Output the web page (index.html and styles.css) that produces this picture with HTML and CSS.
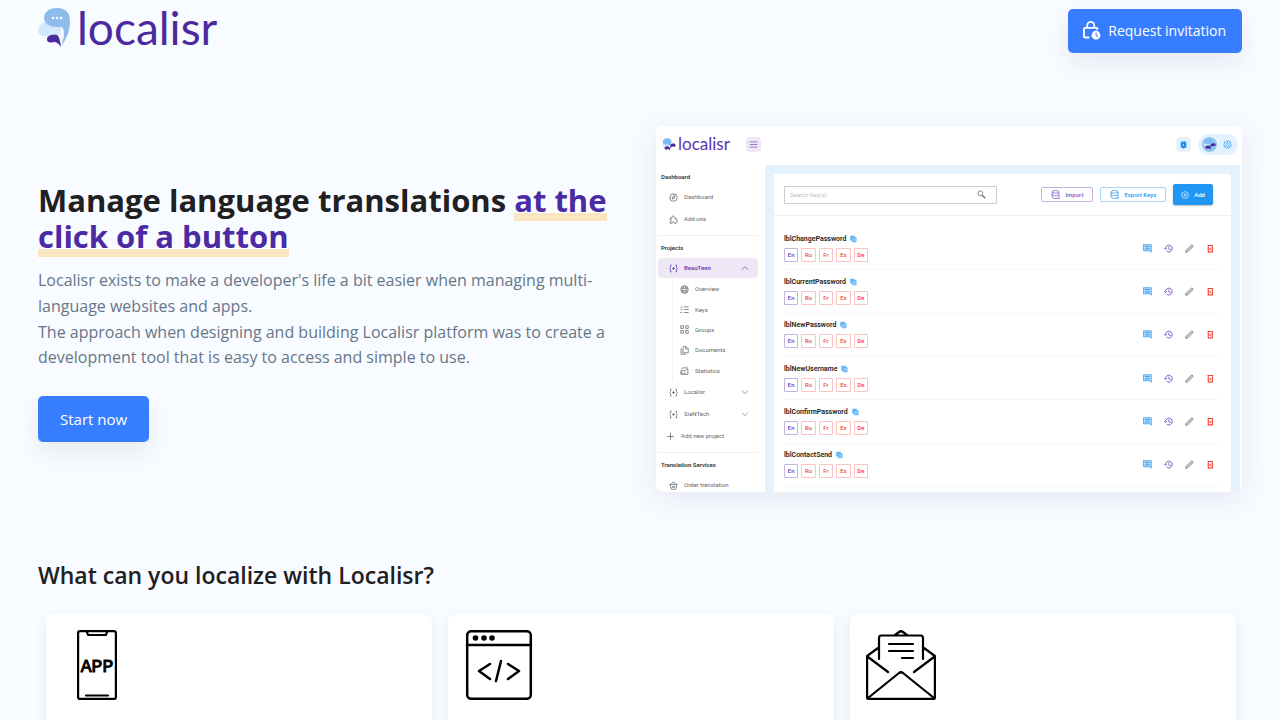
FILE: index.html
```html
<!DOCTYPE html>
<html lang="en">
<head>
<meta charset="utf-8">
<title>Localisr</title>
<meta name="viewport" content="width=device-width, initial-scale=1">
<link rel="stylesheet" href="styles.css">
</head>
<body>
<svg class="sprite" aria-hidden="true">
  <symbol id="mark" viewBox="0 0 34 40">
    <path fill="#d2e9fb" d="M15 13C7 12 1 17 0 22c0 4 4 7 9 6 5 0 8-2 13-1l2-8z"/>
    <path fill="#8dbcec" d="M19 0C10 0 6 5 6 10s5 9 13 9h5c3 3 2 11-1 19 6-7 9-17 9-25C32 5 28 0 19 0z"/>
    <path fill="#e9f4fd" d="M24 20c4 5 1 12-1 19l-1-9c4-2 4-6 2-10z"/>
    <path fill="#4b2a9e" d="M9 31c0-4 6-5 10-4 2 1 3 5 4 12-2-3-4-5-7-5-4 1-7 1-7-3z"/>
    <g fill="#fff"><circle cx="15" cy="10" r="1.300"/><circle cx="19" cy="10" r="1.300"/><circle cx="23" cy="10" r="1.300"/></g>
  </symbol>
  <symbol id="mark-wide" viewBox="0 0 34 30">
    <path fill="#cde8fb" d="M11 6C4 8 1 13 2 19l7 4 12-9z"/>
    <path fill="#7fbcf0" d="M13 0C5 0 1 5 2 10c1 4 6 6 13 5l5 3c4-4 6-18-7-18z"/>
    <path fill="#4b2a9e" d="M6 24c0-5 9-7 13-2l1 8c-3-5-6-3-9-3-3 1-5-1-5-3zm14-7c2-5 13-6 13 0 0 4-4 4-7 3-3 0-5 3-6 6z"/>
  </symbol>
  <symbol id="lock" viewBox="0 0 24 24">
    <path fill="none" stroke="#fff" stroke-width="2.200" d="M10 21H4.600a1 1 0 0 1-1-1V10.500a1 1 0 0 1 1-1h14a1 1 0 0 1 1 1V12M7.500 9V6.500a4.200 4.200 0 0 1 8.400 0V9"/>
    <path fill="#fff" d="M18 13a5.300 5.300 0 1 0 0 10.600A5.300 5.300 0 0 0 18 13zm1.800 7.800-2.300-2.200V15h1.200v3.100l1.900 1.900z"/>
  </symbol>
  <symbol id="menu" viewBox="0 0 24 24"><path d="M2 5h20M2 12h20M2 19h20"/></symbol>
  <symbol id="gauge" viewBox="0 0 24 24"><circle cx="12" cy="12" r="10"/><path d="m8 16 2-6 6-3-2 7zM12 3v2M4 12h2"/></symbol>
  <symbol id="puzzle" viewBox="0 0 24 24"><path d="M3 8h5c-2-7 7-7 6 0h5v5c5-1 5 6 0 6v3h-5c0-5-6-5-6 0H3v-5c5 0 5-5 0-5z"/></symbol>
  <symbol id="braces" viewBox="0 0 24 24"><path d="M7 3H4v6l-2 3 2 3v6h3M17 3h3v6l2 3-2 3v6h-3M8 12h8M12 8v8"/></symbol>
  <symbol id="globe" viewBox="0 0 24 24"><circle cx="12" cy="12" r="10"/><ellipse cx="12" cy="12" rx="4.500" ry="10"/><path d="M2.500 8.500h19M2.500 15.500h19"/></symbol>
  <symbol id="checks" viewBox="0 0 24 24"><path d="m1 5 2 2 4-4M1 12l2 2 4-4M1 20h5M11 5h12M11 12h12M11 20h12"/></symbol>
  <symbol id="groups" viewBox="0 0 24 24"><path d="M2 2h7v7H2zM15 2h7v7h-7zM2 15h7v7H2zM15 15h7v7h-7z"/></symbol>
  <symbol id="docs" viewBox="0 0 24 24"><path d="M8 1h8l6 6v11H8zM15 2v6h6M3 6v16h13"/></symbol>
  <symbol id="stats" viewBox="0 0 24 24"><path d="M3 12v10h18V8M3 22V14l5-3 5 3 8-9M8 18v4M13 17v5M3 8l6-4 4 2 7-4"/></symbol>
  <symbol id="plus" viewBox="0 0 24 24"><path d="M12 3v18M3 12h18"/></symbol>
  <symbol id="basket" viewBox="0 0 24 24"><path d="M1 9h22M3 9l3 13h12l3-13M6 9l6-7 6 7M9 13v5M15 13v5M12 13v5"/></symbol>
  <symbol id="up" viewBox="0 0 24 24"><path d="m3 17 9-9 9 9"/></symbol>
  <symbol id="down" viewBox="0 0 24 24"><path d="m3 8 9 9 9-9"/></symbol>
  <symbol id="search" viewBox="0 0 24 24"><circle cx="9" cy="9" r="6.500"/><path stroke-width="3" d="m14 14 8 8"/></symbol>
  <symbol id="database" viewBox="0 0 24 24"><ellipse cx="12" cy="5" rx="9" ry="3.500"/><path d="M3 5v14c0 4 12 4 15 2M21 5v11M3 12c0 4 18 4 18 0M22 16v6h-6"/></symbol>
  <symbol id="circle-plus" viewBox="0 0 24 24"><circle cx="12" cy="12" r="10"/><path d="M12 7v10M7 12h10"/></symbol>
  <symbol id="gear" viewBox="0 0 24 24"><circle cx="12" cy="12" r="4"/><path d="m9 2 3 2 3-2 2 3 4 1-1 4 2 2-2 3 1 3-4 1-2 3-3-2-3 2-2-3-4-1 1-3-2-3 2-2-1-4 4-1z"/></symbol>
  <symbol id="bug" viewBox="0 0 24 24"><path fill="currentColor" d="M7 6h10v13l-5 3-5-3z"/><path d="M3 8h18M3 13h18M3 18h18M8 2l3 4M16 2l-3 4"/><path stroke="#e3f2fd" d="M12 10v6"/></symbol>
  <symbol id="copy" viewBox="0 0 24 24"><path fill="#90caf9" d="M2 16V2h13v4H7v10zM8 7h13v15H8z"/></symbol>
  <symbol id="comment" viewBox="0 0 24 24"><path fill="#bbdefb" d="M1 2h21v20l-4-4H1z"/><path stroke-width="2.500" d="M5 7h13M5 13h13"/></symbol>
  <symbol id="history" viewBox="0 0 24 24"><path stroke-width="2.500" d="M4 12a9 9 0 1 1 3 7M0 11l4 4 4-4M13 7v6l5 2"/></symbol>
  <symbol id="pencil" viewBox="0 0 24 24"><path fill="#ccc" d="M2 22v-4L18 2l4 4L6 22z"/></symbol>
  <symbol id="trash" viewBox="0 0 24 24"><path stroke-width="3" d="M4 4h15M6 6v15h11V6"/><path d="m9 10 5 6M14 10l-5 6"/></symbol>
</svg>

<header class="site-header">
  <a class="logo" href="#"><svg class="logo-mark" aria-hidden="true"><use href="#mark"/></svg><span class="wordmark">localisr</span></a>
  <button class="btn btn-invite" type="button"><svg class="btn-icon" aria-hidden="true"><use href="#lock"/></svg>Request invitation</button>
</header>

<main>
<section class="hero">
  <div class="intro">
    <h1>Manage language translations <span class="mark-text">at the click of a button</span></h1>
    <p>Localisr exists to make a developer's life a bit easier when managing multi-language websites and apps.<br>The approach when designing and building Localisr platform was to create a development tool that is easy to access and simple to use.</p>
    <a class="btn btn-start" href="#">Start now</a>
  </div>

  <div class="app">
    <div class="app-top">
      <a class="app-logo" href="#"><svg class="app-mark" aria-hidden="true"><use href="#mark-wide"/></svg><span class="app-word">localisr</span></a>
      <button class="square purple" type="button" aria-label="Menu"><svg class="icon"><use href="#menu"/></svg></button>
      <div class="app-user">
        <button class="square" type="button" aria-label="Report a bug"><svg class="icon"><use href="#bug"/></svg></button>
        <button class="profile" type="button" aria-label="Profile"><span class="avatar"><svg class="avatar-mark"><use href="#mark-wide"/></svg></span><svg class="icon"><use href="#gear"/></svg></button>
      </div>
    </div>
    <div class="app-body">
      <nav class="side">
        <div class="side-title">Dashboard</div>
        <a class="item" href="#"><svg class="icon"><use href="#gauge"/></svg>Dashboard</a>
        <a class="item" href="#"><svg class="icon"><use href="#puzzle"/></svg>Add-ons</a>
        <hr class="rule">
        <div class="side-title">Projects</div>
        <a class="item active" href="#"><svg class="icon"><use href="#braces"/></svg>BeauTeen<svg class="icon chevron"><use href="#up"/></svg></a>
        <div class="sub">
          <a class="subitem" href="#"><svg class="icon"><use href="#globe"/></svg>Overview</a>
          <a class="subitem" href="#"><svg class="icon"><use href="#checks"/></svg>Keys</a>
          <a class="subitem" href="#"><svg class="icon"><use href="#groups"/></svg>Groups</a>
          <a class="subitem" href="#"><svg class="icon"><use href="#docs"/></svg>Documents</a>
          <a class="subitem" href="#"><svg class="icon"><use href="#stats"/></svg>Statistics</a>
        </div>
        <a class="item" href="#"><svg class="icon"><use href="#braces"/></svg>Localisr<svg class="icon chevron"><use href="#down"/></svg></a>
        <a class="item" href="#"><svg class="icon"><use href="#braces"/></svg>SiaNTech<svg class="icon chevron"><use href="#down"/></svg></a>
        <a class="item add" href="#"><svg class="icon"><use href="#plus"/></svg>Add new project</a>
        <hr class="rule">
        <div class="side-title">Translation Services</div>
        <a class="item" href="#"><svg class="icon"><use href="#basket"/></svg>Order translation</a>
      </nav>
      <div class="workspace">
        <div class="panel">
          <div class="toolbar">
            <div class="search"><input type="text" placeholder="Search Key(s)" aria-label="Search keys"><svg class="icon"><use href="#search"/></svg></div>
            <button class="tool import" type="button"><svg class="icon"><use href="#database"/></svg>Import</button>
            <button class="tool export" type="button"><svg class="icon"><use href="#database"/></svg>Export Keys</button>
            <button class="tool create" type="button"><svg class="icon"><use href="#circle-plus"/></svg>Add</button>
          </div>
          <ul class="keys" id="keys"></ul>
        </div>
      </div>
    </div>
  </div>
</section>

<section class="features">
  <h2>What can you localize with Localisr?</h2>
  <div class="cards">
    <article class="card">
      <svg class="card-icon" viewBox="0 0 70 70" role="img" aria-label="Mobile apps" fill="none" stroke="#000" stroke-width="2.200" stroke-linecap="round" stroke-linejoin="round">
        <rect x="16.100" y="1.100" width="37.800" height="67.800" rx="2"/><path d="M25 2l1 3h18l1-3M24 65.500h22"/>
        <text class="app-label" x="35" y="42" text-anchor="middle">APP</text>
      </svg>
    </article>
    <article class="card">
      <svg class="card-icon" viewBox="0 0 70 70" role="img" aria-label="Websites" fill="none" stroke="#000" stroke-width="2.500" stroke-linecap="round" stroke-linejoin="round">
        <rect x="3.200" y="1.200" width="63.600" height="67.600" rx="4"/><path d="M3 15h64M26 34 15 41l11 8M44 34l11 7-11 8M37 31l-5 20"/>
        <g fill="#000" stroke="none"><circle cx="11.500" cy="8" r="2.800"/><circle cx="20" cy="8" r="2.800"/><circle cx="28" cy="8" r="2.800"/></g>
      </svg>
    </article>
    <article class="card">
      <svg class="card-icon" viewBox="0 0 70 70" role="img" aria-label="Emails" fill="none" stroke="#000" stroke-width="2.200" stroke-linecap="round" stroke-linejoin="round">
        <path d="M13 29V8q0-2.500 2.500-2.500h39Q57 5.500 57 8v21M29 5l4-3q2-1.500 4 0l4 3M23 14h24M23 21h24M36 28h11M12 18 1.100 26v42q0 .9 1 .9h65.800q1 0 1-.9V26L58 18M2 27l20 15M68 27 48 42M2 68l31-25q2-1.500 4 0l31 25"/>
      </svg>
    </article>
  </div>
</section>
</main>
<script src="keys.js"></script>
</body>
</html>
```

FILE: styles.css
```css
* { box-sizing: border-box; }
body {
  margin: 0;
  height: 100vh;
  overflow: hidden;
  background: #f8fbff;
  color: #1e2022;
  font-family: "Open Sans", "Noto Sans", sans-serif;
  font-size: 16px;
}
a { color: inherit; text-decoration: none; }
button { font: inherit; cursor: pointer; }
.sprite { position: absolute; width: 0; height: 0; }

.site-header {
  display: flex;
  justify-content: space-between;
  align-items: center;
  height: 62px;
  padding: 0 38px;
}
.logo { display: flex; align-items: center; gap: 5px; padding-bottom: 6px; }
.logo-mark { width: 34px; height: 40px; }
.wordmark { color: #4b2a9e; font-family: Lato, sans-serif; font-size: 46px; line-height: 40px; }
.btn {
  display: inline-flex;
  align-items: center;
  border: 0;
  border-radius: 5px;
  background: #377dff;
  color: #fff;
  box-shadow: 0 10px 25px rgba(30, 40, 90, .08);
}
.btn-invite { height: 44px; padding: 0 16px 2px 13px; gap: 7px; font-size: 14px; }
.btn-icon { width: 20px; height: 20px; }
.btn-start { height: 46px; padding: 0 22px; font-size: 15px; }

.hero {
  display: grid;
  grid-template-columns: 1fr 1fr;
  gap: 32px;
  align-items: center;
  padding: 64px 38px 0;
}
.intro { padding-top: 6px; }
h1 { margin: 0 0 14px; font-size: 31px; line-height: 36px; font-weight: 700; }
.mark-text { color: #4b2aa3; background: linear-gradient(transparent 80%, #f9e5bf 80%); }
.intro p { margin: 0 0 25px; color: #677788; line-height: 1.6; }

.app {
  display: flex;
  flex-direction: column;
  aspect-ratio: 586 / 366;
  overflow: hidden;
  border-radius: 7px;
  background: #fff;
  box-shadow: 0 6px 30px rgba(60, 70, 130, .1);
  color: #666;
  font-family: Roboto, sans-serif;
  font-size: 6px;
  line-height: 8px;
}
.icon { flex: none; width: 9px; height: 9px; fill: none; stroke: currentColor; stroke-width: 2; }
.app-top { display: flex; align-items: center; flex: none; height: 39px; padding: 0 4px 3px 6px; }
.app-logo { display: flex; align-items: center; gap: 2px; width: 84px; }
.app-mark { width: 14px; height: 13px; }
.app-word { color: #5a35b0; font-family: Lato, sans-serif; font-size: 17px; line-height: 16px; }
.square {
  display: grid;
  place-items: center;
  width: 15px;
  height: 15px;
  padding: 0;
  border: 0;
  border-radius: 4px;
  background: #e3f2fd;
  color: #1e88e5;
}
.purple { background: #ede7f6; color: #7e57c2; }
.app-user { display: flex; align-items: center; gap: 7px; margin-left: auto; }
.profile {
  display: flex;
  align-items: center;
  gap: 6px;
  height: 21px;
  padding: 0 6px 0 4px;
  border: 0;
  border-radius: 11px;
  background: #e3f2fd;
  color: #2196f3;
}
.avatar { display: grid; place-items: center; width: 15px; height: 15px; border-radius: 50%; background: #90c5ee; }
.avatar-mark { width: 13px; height: 12px; }
.app-body { display: flex; flex: 1; min-height: 0; }

.side { flex: none; width: 109px; padding: 3px 7px 0 2px; }
.side-title { padding-left: 3px; color: #333; font-weight: 600; line-height: 18px; }
.item { display: flex; align-items: center; gap: 6px; height: 22px; padding: 0 9px 0 11px; }
.active { height: 20px; margin-top: 1px; border-radius: 4px; background: #ede7f6; color: #5e35b1; font-weight: 500; }
.add { padding-left: 8px; }
.chevron { width: 8px; height: 8px; margin-left: auto; }
.rule { margin: 5px 0 3px; border: 0; border-top: 1px solid #f0f0f0; }
.sub { display: grid; grid-auto-rows: 1fr; height: 103px; margin-left: 14px; padding: 1px 0 0 7px; border-left: 1px solid #e9f4fd; }
.subitem { display: flex; align-items: center; gap: 6px; }

.workspace { flex: 1; display: flex; margin-right: 2px; padding: 9px 9px 0; background: #e3f2fd; }
.panel { flex: 1; display: flex; flex-direction: column; background: #fff; border-radius: 2px 2px 0 0; }
.toolbar { display: flex; align-items: center; flex: none; height: 42px; padding: 0 18px 0 10px; border-bottom: 1px solid #eee; }
.search {
  display: flex;
  align-items: center;
  width: 213px;
  height: 18px;
  margin-right: auto;
  padding: 0 10px 0 5px;
  border: 1px solid #ccc;
  border-radius: 1px;
}
.search input { flex: 1; min-width: 0; padding: 0; border: 0; outline: 0; background: none; font: inherit; }
.search input::placeholder { color: #bbb; }
.tool {
  display: flex;
  align-items: center;
  justify-content: center;
  gap: 5px;
  height: 15px;
  margin-left: 7px;
  padding: 0 9px;
  border: 1px solid;
  border-radius: 2px;
  background: #fff;
  font-weight: 500;
}
.import { color: #7e57c2; border-color: #c5b4e3; }
.export { color: #2196f3; border-color: #a6d4fa; }
.create { height: 21px; padding: 0 7px; background: #2196f3; border-color: #2196f3; color: #fff; box-shadow: 0 1px 2px rgba(0, 0, 0, .25); }
.create .icon { width: 8px; height: 8px; }

.keys { flex: 1; display: grid; grid-auto-rows: 1fr; margin: 0; padding: 11px 11px 5px 10px; list-style: none; }
.key { display: flex; align-items: center; justify-content: space-between; border-bottom: 1px solid #f6f6f6; }
.key-name { display: flex; align-items: center; gap: 4px; margin-bottom: 5px; color: #212121; font-size: 7px; font-weight: 600; }
.key-name .icon { width: 7px; height: 8px; color: #42a5f5; }
.tags { display: grid; grid-template-columns: repeat(5, 1fr); gap: 3px; width: 84px; }
.tag {
  height: 14px;
  padding: 0;
  border: 1px solid #fbc4c0;
  border-radius: 1px;
  background: #fff;
  color: #f44336;
  font-size: 6px;
  font-weight: 500;
  line-height: 12px;
}
.tag:first-child { border-color: #c5b4e3; color: #673ab7; }
.actions { display: flex; gap: 12px; padding-right: 5px; }
.action { display: flex; padding: 0; border: 0; background: none; }
.blue { color: #2196f3; }
.violet { color: #7e57c2; }
.gray { color: #757575; }
.red { color: #f44336; }

.features { padding: 67px 38px 0; }
h2 { margin: 0; font-size: 23px; line-height: 32px; font-weight: 600; }
.cards { display: grid; grid-template-columns: repeat(3, 1fr); gap: 16px; padding: 23px 6px 0 8px; }
.card { min-height: 220px; padding: 16px; border-radius: 8px; background: #fff; box-shadow: 0 4px 12px rgba(60, 80, 150, .1); }
.card-icon { display: block; width: 70px; height: 70px; }
.app-label { fill: #000; stroke-width: 1px; font-family: "Liberation Mono", monospace; font-size: 18px; }
```

FILE: keys.js
```js
const names = ["lblChangePassword", "lblCurrentPassword", "lblNewPassword", "lblNewUsername", "lblConfirmPassword", "lblContactSend"];
const languages = ["En", "Ro", "Fr", "Es", "De"];
const actions = [["comment", "blue", "Comment"], ["history", "violet", "History"], ["pencil", "gray", "Edit"], ["trash", "red", "Delete"]];
const icon = id => `<svg class="icon"><use href="#${id}"/></svg>`;

document.getElementById("keys").innerHTML = names.map(name => `
  <li class="key">
    <div>
      <div class="key-name">${name}${icon("copy")}</div>
      <div class="tags">${languages.map(l => `<button class="tag" type="button">${l}</button>`).join("")}</div>
    </div>
    <div class="actions">${actions.map(([id, tone, label]) => `<button class="action ${tone}" type="button" aria-label="${label}">${icon(id)}</button>`).join("")}</div>
  </li>`).join("");
```
